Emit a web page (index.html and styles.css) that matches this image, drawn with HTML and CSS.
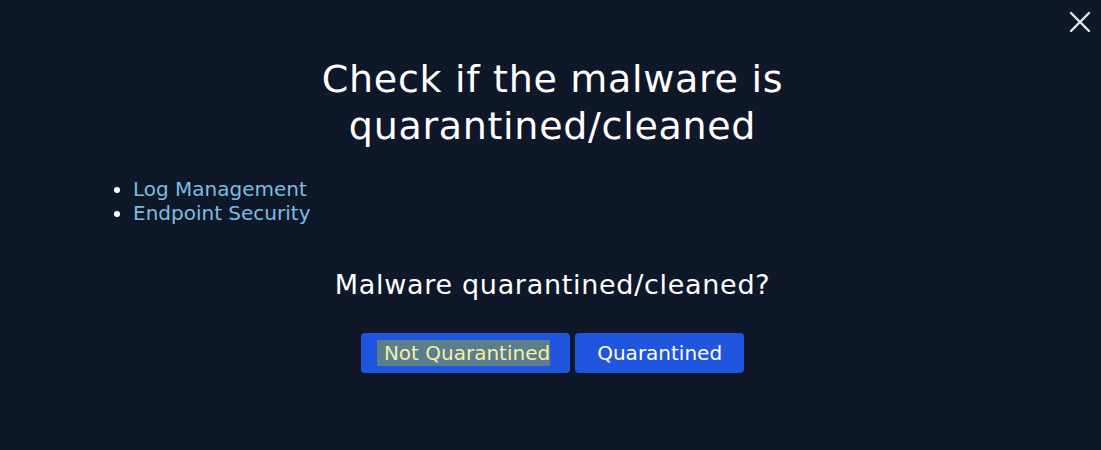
FILE: index.html
```html
<!DOCTYPE html>
<html lang="en">
<head>
<meta charset="utf-8">
<title>Check if the malware is quarantined/cleaned</title>
<link rel="stylesheet" href="styles.css">
</head>
<body>
<div class="modal">
  <button class="close" aria-label="Close">
    <svg width="22" height="22" viewBox="0 0 22 22"><path d="M2 2 L20 20 M20 2 L2 20" stroke="#e6e9ef" stroke-width="2.4" stroke-linecap="round"/></svg>
  </button>
  <div class="content">
    <h1 class="title">Check if the malware is<br>quarantined/cleaned</h1>
    <ul class="tags">
      <li>Log Management</li>
      <li>Endpoint Security</li>
    </ul>
    <p class="question">Malware quarantined/cleaned?</p>
    <div class="actions">
      <button class="btn btn-first"><span class="sel">Not Quarantined</span></button>
      <button class="btn">Quarantined</button>
    </div>
  </div>
</div>
</body>
</html>
```
FILE: styles.css
```css
html, body {
  margin: 0;
  padding: 0;
  background: #0f1828;
  height: 100%;
}
body {
  font-family: "DejaVu Sans", "Noto Sans", sans-serif;
  color: #ffffff;
}
.modal {
  position: relative;
  height: 450px;
}
.close {
  position: absolute;
  top: 11px;
  right: 10px;
  background: none;
  border: 0;
  padding: 0;
  width: 22px;
  height: 22px;
  cursor: pointer;
}
.close svg { display: block; }
.content {
  padding: 56px 91px 0 95px;
}
.title {
  margin: 0;
  text-align: center;
  font-weight: 400;
  font-size: 38px;
  letter-spacing: 0.7px;
  line-height: 47px;
  color: #ffffff;
}
.tags {
  margin: 27px 0 0 0;
  padding-left: 38px;
  font-size: 20px;
  line-height: 24px;
  color: #7bbde0;
}
.tags li::marker { color: #ffffff; }
.question {
  margin: 44px 0 0 0;
  text-align: center;
  font-size: 27px;
  letter-spacing: 0.7px;
  line-height: 32px;
}
.actions {
  margin-top: 32px;
  display: flex;
  justify-content: center;
  gap: 5px;
}
.btn {
  background: #1f55df;
  color: #ffffff;
  border: 0;
  border-radius: 4px;
  height: 40px;
  padding: 0 22px;
  font-family: inherit;
  font-size: 20px;
}
.btn-first { padding: 0 20px 0 16px; }
.sel {
  background: #5b7d8c;
  color: #f3f2a8;
  padding: 1px 0 1px 7px;
}
```
